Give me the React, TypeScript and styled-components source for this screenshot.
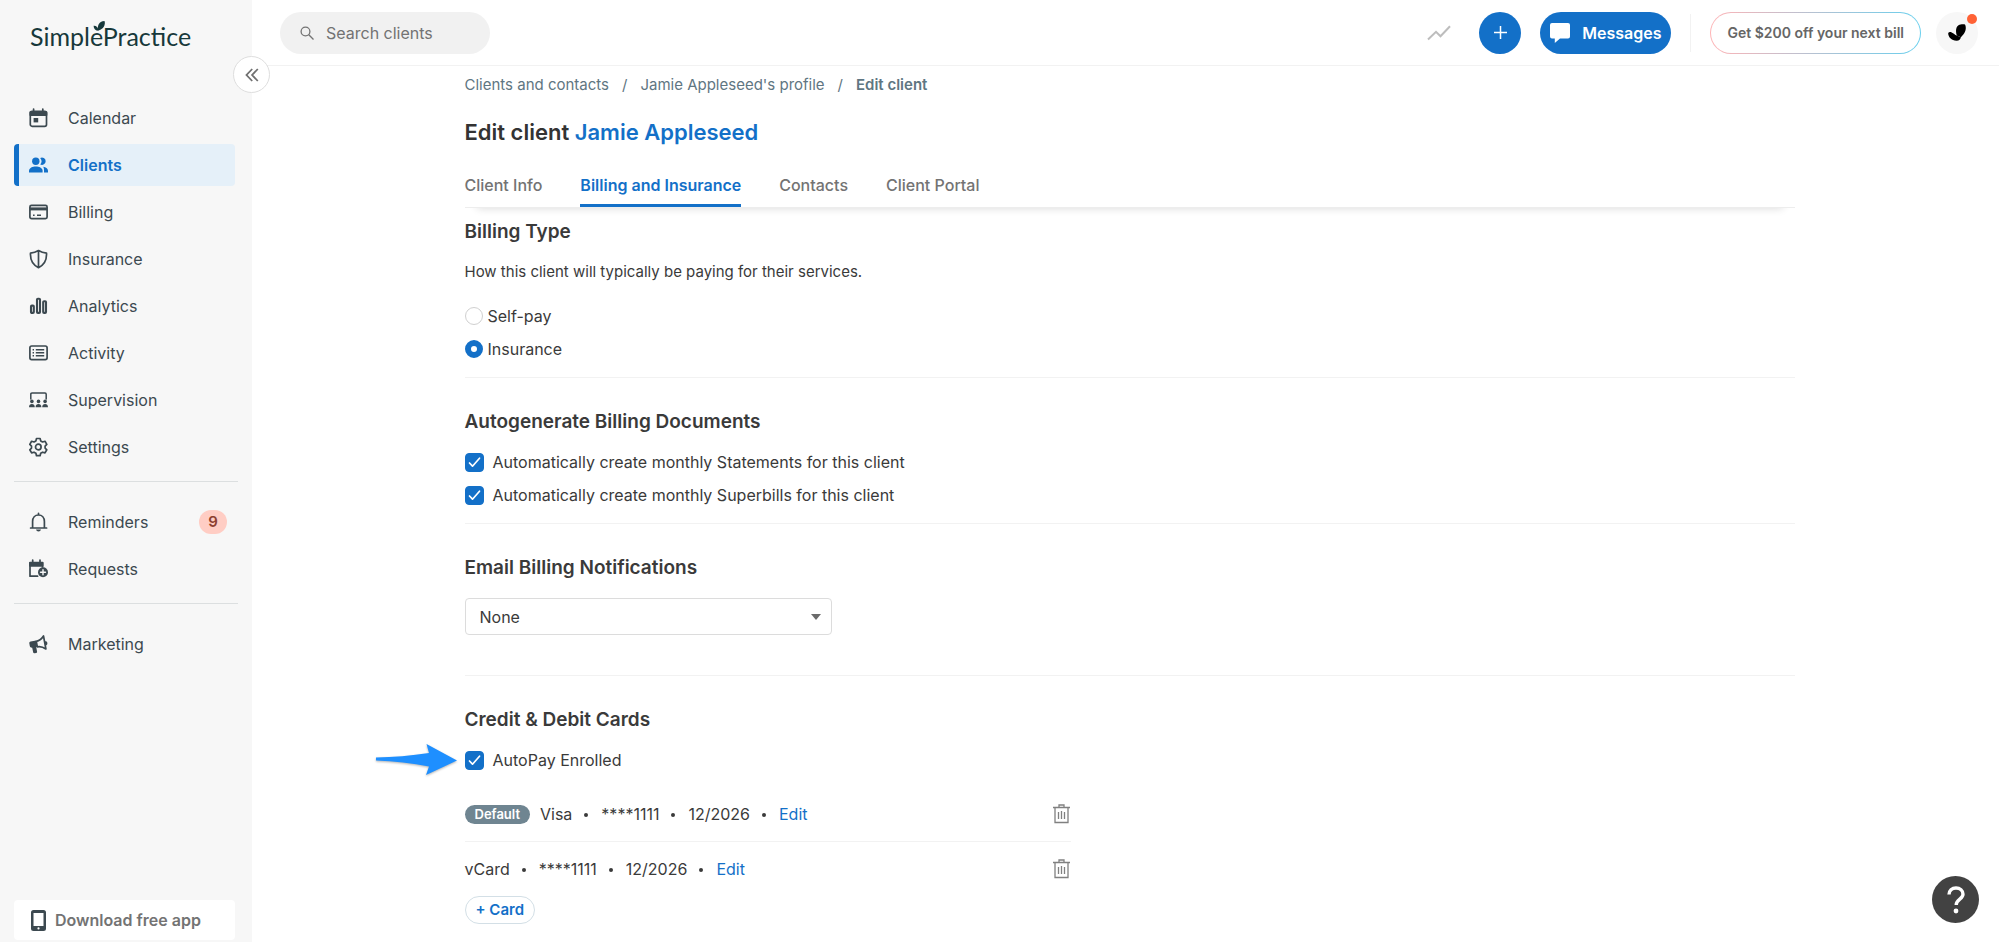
import React, { useState } from 'react';
import styled, { createGlobalStyle, css } from 'styled-components';

const colors = {
  blue: '#1370c8',
  slate: '#3c4950',
  text: '#3a3a3a',
  muted: '#737373',
  crumb: '#5f7682',
  line: '#f2f2f2',
  sidebar: '#f7f7f7',
};

const GlobalStyle = createGlobalStyle`
  *, *::before, *::after { box-sizing: border-box; }
  body {
    margin: 0;
    background: #fff;
    color: ${colors.text};
    font-family: Inter, "Liberation Sans", sans-serif;
    font-size: 16px;
    line-height: 20px;
  }
  button, input, select { font: inherit; color: inherit; }
  button { cursor: pointer; }
  a { color: inherit; text-decoration: none; }
  svg { display: block; flex: none; }
`;

/* ---------- Shell ---------- */

const Shell = styled.div`
  display: flex;
  min-height: 100vh;
`;

const Sidebar = styled.aside`
  position: relative;
  display: flex;
  flex-direction: column;
  flex: none;
  width: 252px;
  padding: 20px 14px 2px;
  background: ${colors.sidebar};
`;

const Logo = styled.a`
  position: relative;
  align-self: flex-start;
  margin: 0 0 45px 16px;
  color: #17393b;
  font-family: Lato, "Liberation Sans", sans-serif;
  font-size: 25px;
  line-height: 32px;
`;

const LogoLeaf = styled.svg`
  position: absolute;
  left: 63px;
  top: 0;
`;

const CollapseButton = styled.button`
  position: absolute;
  top: 56px;
  right: -18px;
  display: grid;
  place-items: center;
  width: 37px;
  height: 37px;
  padding: 0;
  border: 1px solid #dedede;
  border-radius: 50%;
  background: #fff;
  color: #707070;
`;

const NavGroup = styled.ul`
  display: flex;
  flex-direction: column;
  gap: 5px;
  margin: 0;
  padding: 0 3px 0 0;
  list-style: none;
`;

const NavLink = styled.a<{ $active?: boolean }>`
  display: flex;
  align-items: center;
  gap: 20px;
  height: 42px;
  padding: 0 8px 0 10px;
  border-left: 5px solid transparent;
  border-radius: 4px;
  color: ${colors.slate};
  ${(p) =>
    p.$active &&
    css`
      border-left-color: ${colors.blue};
      background: #e5f0f9;
      color: ${colors.blue};
      font-weight: 600;
    `}
`;

const NavBadge = styled.span`
  margin-left: auto;
  min-width: 28px;
  border-radius: 12px;
  background: #ffcdc4;
  color: #8c4030;
  font-size: 15px;
  font-weight: 600;
  line-height: 24px;
  text-align: center;
`;

const NavDivider = styled.hr`
  width: 100%;
  height: 1px;
  margin: 13px 0 19px;
  border: 0;
  background: #dcdfe0;
`;

const DownloadButton = styled.button`
  display: flex;
  align-items: center;
  gap: 9px;
  height: 40px;
  margin: auto 3px 0 0;
  padding: 0 17px;
  border: 0;
  border-radius: 4px;
  background: #fff;
  color: ${colors.muted};
  font-weight: 600;

  svg { color: ${colors.slate}; }
`;

const Column = styled.div`
  flex: 1;
  min-width: 0;
`;

/* ---------- Top bar ---------- */

const TopBar = styled.header`
  display: flex;
  align-items: center;
  justify-content: space-between;
  height: 66px;
  padding: 0 21px 0 28px;
  border-bottom: 1px solid ${colors.line};
`;

const SearchBox = styled.label`
  display: flex;
  align-items: center;
  gap: 12px;
  width: 210px;
  height: 42px;
  padding: 0 20px;
  border-radius: 21px;
  background: #f1f1f1;
  color: ${colors.muted};
`;

const SearchInput = styled.input`
  width: 100%;
  min-width: 0;
  padding: 0;
  border: 0;
  outline: 0;
  background: transparent;

  &::placeholder { color: ${colors.muted}; opacity: 1; }
`;

const TopActions = styled.div`
  display: flex;
  align-items: center;
`;

const TrendButton = styled.button`
  margin-right: 28px;
  padding: 0;
  border: 0;
  background: none;
  color: #bdbdbd;
`;

const AddButton = styled.button`
  display: grid;
  place-items: center;
  width: 42px;
  height: 42px;
  margin-right: 19px;
  padding: 0;
  border: 0;
  border-radius: 50%;
  background: ${colors.blue};
  color: #fff;
`;

const MessagesButton = styled.button`
  display: flex;
  align-items: center;
  gap: 12px;
  height: 42px;
  padding: 0 10px;
  border: 0;
  border-radius: 21px;
  background: ${colors.blue};
  color: #fff;
  font-weight: 600;
`;

const TopDivider = styled.span`
  width: 1px;
  height: 38px;
  margin: 0 19px;
  background: ${colors.line};
`;

const PromoButton = styled.button`
  height: 42px;
  margin-right: 15px;
  padding: 0 16px;
  border: 1px solid transparent;
  border-radius: 21px;
  background:
    linear-gradient(#fff, #fff) padding-box,
    linear-gradient(90deg, #ffb4b6, #68cfee) border-box;
  color: #666;
  font-size: 14px;
  font-weight: 600;
`;

const AvatarButton = styled.button`
  position: relative;
  display: grid;
  place-items: center;
  width: 42px;
  height: 42px;
  padding: 0;
  border: 0;
  border-radius: 50%;
  background: #f7f7f7;
  color: #000;
`;

const AvatarDot = styled.span`
  position: absolute;
  top: 2px;
  right: 1px;
  width: 10px;
  height: 10px;
  border-radius: 50%;
  background: #ff6236;
`;

/* ---------- Page ---------- */

const Page = styled.main`
  padding: 9px 16px 16px 24px;
`;

const PageInner = styled.div`
  max-width: 1330px;
  margin: 0 auto;
`;

const Breadcrumbs = styled.nav`
  display: flex;
  gap: 13px;
  color: ${colors.crumb};
  font-size: 15px;
`;

const CurrentCrumb = styled.span`
  font-weight: 600;
`;

const Title = styled.h1`
  margin: 23px 0 29px;
  color: #333;
  font-size: 22px;
  font-weight: 600;
  line-height: 28px;

  a { color: ${colors.blue}; }
`;

const Tabs = styled.nav`
  display: flex;
  gap: 38px;
  border-bottom: 1px solid #ededed;
  box-shadow: 0 12px 8px -12px rgba(0, 0, 0, 0.16);
`;

const Tab = styled.a<{ $active?: boolean }>`
  padding-bottom: 9px;
  border-bottom: 3px solid ${(p) => (p.$active ? colors.blue : 'transparent')};
  color: ${(p) => (p.$active ? colors.blue : colors.muted)};
  font-weight: ${(p) => (p.$active ? 600 : 500)};
`;

const Section = styled.section<{ $first?: boolean; $roomy?: boolean }>`
  padding: ${(p) => (p.$first ? 12 : 32)}px 0 ${(p) => (p.$roomy ? 40 : 18)}px;
  border-bottom: 1px solid ${colors.line};

  &:last-child { border-bottom: 0; padding-bottom: 0; }
`;

const Heading = styled.h2`
  margin: 0 0 18px;
  font-size: 19px;
  font-weight: 600;
  line-height: 24px;
`;

const Description = styled.p`
  margin: 0 0 24px;
  font-size: 15px;
`;

const ChoiceList = styled.div`
  display: flex;
  flex-direction: column;
  gap: 13px;
`;

const Choice = styled.label<{ $gap: number }>`
  display: flex;
  align-items: center;
  align-self: flex-start;
  gap: ${(p) => p.$gap}px;
`;

const Radio = styled.input`
  appearance: none;
  width: 18px;
  height: 18px;
  margin: 0;
  border: 1px solid #d0d0d0;
  border-radius: 50%;
  background: #fff;

  &:checked { border: 6px solid ${colors.blue}; }
`;

const CheckInput = styled.input`
  appearance: none;
  width: 19px;
  height: 19px;
  margin: 0;
  border: 1px solid #d0d0d0;
  border-radius: 4px;
  background: #fff;

  &:checked {
    border-color: ${colors.blue};
    background: ${colors.blue};
  }
`;

const CheckBoxWrap = styled.span`
  display: grid;
  place-items: center;
  flex: none;

  > * { grid-area: 1 / 1; }
  > svg { pointer-events: none; }
`;

const Callout = styled.svg`
  position: absolute;
  right: calc(100% + 8px);
  top: -6px;
  filter: drop-shadow(0 1px 1px rgba(0, 0, 0, 0.3));
`;

const CalloutRow = styled.div`
  position: relative;
  display: flex;
`;

const SelectWrap = styled.div`
  display: grid;
  align-items: center;
  width: 367px;
  max-width: 100%;

  > * { grid-area: 1 / 1; }
  > svg { justify-self: end; margin-right: 11px; pointer-events: none; }
`;

const Select = styled.select`
  appearance: none;
  width: 100%;
  height: 37px;
  padding: 0 32px 0 14px;
  border: 1px solid #dcdcdc;
  border-radius: 4px;
  background: #fff;
`;

const CardList = styled.ul`
  max-width: 606px;
  margin: 17px 0 0;
  padding: 0;
  list-style: none;
`;

const CardRow = styled.li`
  display: flex;
  align-items: center;
  height: 54px;

  & + & { border-top: 1px solid ${colors.line}; height: 55px; }
`;

const DefaultTag = styled.span`
  margin-right: 10px;
  padding: 0 10px;
  border-radius: 10px;
  background: #6f8591;
  color: #fff;
  font-size: 13px;
  font-weight: 600;
  line-height: 19px;
`;

const Bullet = styled.span`
  width: 4px;
  height: 4px;
  margin: 2px 13px 0 12px;
  border-radius: 50%;
  background: currentColor;
`;

const EditLink = styled.a`
  color: ${colors.blue};
`;

const TrashButton = styled.button`
  margin-left: auto;
  padding: 0 1px;
  border: 0;
  background: none;
  color: #808080;
`;

const AddCardButton = styled.button`
  height: 28px;
  padding: 0 10px;
  border: 1px solid #d3dfe6;
  border-radius: 14px;
  background: #fff;
  color: ${colors.blue};
  font-size: 15px;
  font-weight: 600;
`;

const HelpButton = styled.button`
  position: fixed;
  right: 20px;
  bottom: 19px;
  display: grid;
  place-items: center;
  width: 47px;
  height: 47px;
  padding: 0;
  border: 0;
  border-radius: 50%;
  background: #424242;
  color: #fff;
`;

/* ---------- Icons ---------- */

const NavSvg = ({ children }: { children: React.ReactNode }) => (
  <svg width="19" height="20" viewBox="0 0 19 20" fill="none" stroke="currentColor" strokeWidth="1.7" strokeLinecap="round" strokeLinejoin="round" aria-hidden="true">
    {children}
  </svg>
);

const icons = {
  calendar: (
    <NavSvg>
      <rect x="1.3" y="3.3" width="16.2" height="15" rx="1.8" />
      <path d="M1.3 4.2h16.2v2.9H1.3zM4.6 1v2.5M13.8 1v2.5" fill="currentColor" />
      <path d="M4.6 10h4.6v4.4H4.6z" fill="currentColor" stroke="none" />
    </NavSvg>
  ),
  clients: (
    <NavSvg>
      <g fill="currentColor" stroke="none">
        <circle cx="6.8" cy="6.2" r="3.7" />
        <path d="M0 17.5v-1.7c0-2.9 3.6-4.3 6.8-4.3s6.8 1.4 6.8 4.3v1.7z" />
        <path d="M11.2 9.4a5 5 0 0 0 0-6.5 3.7 3.7 0 1 1 0 6.5z" />
        <path d="M15 17.5h4v-1.7c0-2.2-2.2-3.6-4.8-4 .6.8.8 2.2.8 3.7z" />
      </g>
    </NavSvg>
  ),
  billing: (
    <NavSvg>
      <rect x=".9" y="3.3" width="17.2" height="13.4" rx="1.6" />
      <path d="M1 5.4h17v3H1z" fill="currentColor" stroke="none" />
      <path d="M4 13.2h1.6M8 13.2h4" strokeWidth="1.5" strokeLinecap="butt" />
    </NavSvg>
  ),
  insurance: (
    <NavSvg>
      <path d="M9.500 1.5c2.300 1.400 5 2.300 8 2.600.4 6.200-2.300 11.700-8 14.600C3.800 15.800 1.100 10.300 1.500 4.100c3-.3 5.700-1.200 8-2.600zM9.500 1.800v16.600" />
    </NavSvg>
  ),
  analytics: (
    <NavSvg>
      <g strokeWidth="2.1">
        <rect x="2" y="9.600" width="2.800" height="7.300" rx=".9" />
        <rect x="8" y="2.700" width="3" height="14.200" rx=".9" />
        <rect x="14.200" y="5.200" width="2.800" height="11.700" rx=".9" />
      </g>
    </NavSvg>
  ),
  activity: (
    <NavSvg>
      <rect x=".9" y="3" width="17.2" height="13.6" rx="1.800" />
      <path d="M3.600 6.800h1.400M3.600 9.800h1.400M3.600 12.800h1.400M6.800 6.800h8.400M6.800 9.800h8.400M6.800 12.800h8.400" strokeWidth="1.600" strokeLinecap="butt" />
    </NavSvg>
  ),
  supervision: (
    <NavSvg>
      <path d="M1.800 9V4.200c0-.7.400-1.200 1.200-1.200h13c.8 0 1.200.5 1.200 1.200V9" strokeWidth="1.500" />
      <g fill="currentColor" stroke="none">
        <circle cx="2.900" cy="11.400" r="1.800" />
        <circle cx="9.500" cy="11.400" r="1.800" />
        <circle cx="16.100" cy="11.400" r="1.800" />
        <path d="M0 17.300c0-2.400 1.200-3.300 2.900-3.300s2.900.9 2.900 3.300zM6.600 17.300c0-2.400 1.200-3.300 2.900-3.300s2.900.9 2.900 3.300zM13.200 17.300c0-2.400 1.200-3.300 2.900-3.300s2.900.9 2.900 3.300z" />
      </g>
    </NavSvg>
  ),
  settings: (
    <NavSvg>
      <circle cx="9.300" cy="10" r="2.800" />
      <path d="M7.500 1.500h3.600l.6 2.400 1.900 1.100 2.400-.7 1.800 3.100-1.700 1.700v2l1.700 1.700-1.800 3.100-2.400-.7-1.900 1.100-.6 2.400H7.500l-.6-2.400L5 15.200l-2.400.7-1.800-3.100 1.700-1.700v-2L.8 7.400l1.800-3.100 2.400.7 1.900-1.100z" />
    </NavSvg>
  ),
  reminders: (
    <NavSvg>
      <path d="M1.600 16h16M3.600 15.800V9.500c0-3.800 2.400-6.500 5.900-6.500s5.900 2.700 5.900 6.500v6.300M9.500 1.300V3" />
      <path d="M7 17.600h5c-.3 1.300-1.300 2-2.500 2s-2.200-.7-2.500-2z" fill="currentColor" stroke="none" />
    </NavSvg>
  ),
  requests: (
    <NavSvg>
      <path d="M8.600 17.200H1V3.600h12.600V8" />
      <path d="M1 3.800h12.600v3H1zM3.700 1v2.500M11 1v2.500" fill="currentColor" />
      <circle cx="14" cy="13.200" r="5" fill="currentColor" stroke="none" />
      <path d="M14 10.700v5M11.500 13.200h5" stroke="#f7f7f7" strokeWidth="1.400" />
    </NavSvg>
  ),
  marketing: (
    <NavSvg>
      <path d="M.3 9.200c0-.9.500-1.500 1.300-1.700l5.600-1 .9 6.300-.9.200.9 4.800c.1.600-.3 1-.8 1.100l-1.900.3c-.6.100-1-.3-1.200-.8l-1-4.600c-1.300.1-2.200-.6-2.400-1.700z" fill="currentColor" stroke="none" />
      <path d="M7.300 7.300c2.900-.6 5.400-2.300 7.200-5.300l2.400 13c-2.800-2-5.600-2.800-8.600-2.200zM16.200 7.800c1.400.1 2 2.200.6 3" />
    </NavSvg>
  ),
};

const TrashIcon = () => (
  <svg width="17" height="20" viewBox="0 0 17 20" fill="none" stroke="currentColor" strokeWidth="1.3" aria-hidden="true">
    <path d="M0 3.500h17M2 3.500v15h13v-15M6 3.500V1h5v2.500M5.500 8v7M8.500 7v8M11.500 8v7" />
  </svg>
);

/* ---------- Content ---------- */

type NavEntry = { label: string; icon: keyof typeof icons; badge?: string };

const navGroups: NavEntry[][] = [
  [
    { label: 'Calendar', icon: 'calendar' },
    { label: 'Clients', icon: 'clients' },
    { label: 'Billing', icon: 'billing' },
    { label: 'Insurance', icon: 'insurance' },
    { label: 'Analytics', icon: 'analytics' },
    { label: 'Activity', icon: 'activity' },
    { label: 'Supervision', icon: 'supervision' },
    { label: 'Settings', icon: 'settings' },
  ],
  [
    { label: 'Reminders', icon: 'reminders', badge: '9' },
    { label: 'Requests', icon: 'requests' },
  ],
  [{ label: 'Marketing', icon: 'marketing' }],
];

const tabs = ['Client Info', 'Billing and Insurance', 'Contacts', 'Client Portal'];

const cards = [
  { name: 'Visa', number: '****1111', expires: '12/2026', isDefault: true },
  { name: 'vCard', number: '****1111', expires: '12/2026', isDefault: false },
];

const Checkbox = ({ label }: { label: string }) => {
  const [checked, setChecked] = useState(true);
  return (
    <Choice $gap={9}>
      <CheckBoxWrap>
        <CheckInput type="checkbox" checked={checked} onChange={(e) => setChecked(e.target.checked)} />
        <svg width="13" height="11" viewBox="0 0 13 11" fill="none" stroke="#fff" strokeWidth="1.7" strokeLinecap="round" strokeLinejoin="round" aria-hidden="true">
          <path d="M1.500 6l3 3.200 7-8" />
        </svg>
      </CheckBoxWrap>
      {label}
    </Choice>
  );
};

export default function App() {
  const [billingType, setBillingType] = useState('Insurance');

  return (
    <>
      <GlobalStyle />
      <Shell>
        <Sidebar>
          <Logo href="#">
            SimplePractice
            <LogoLeaf width="13" height="12" viewBox="0 0 13 12" fill="currentColor" aria-hidden="true">
              <path d="M5 10.500C4.200 6 5.500 1.500 11.500 1c1.200 3.500-.8 8.500-6.500 9.500z" />
              <path d="M5.500 10.800C2.500 10.800.8 9 .6 5.800c2.600-.2 4.600 1.400 4.900 5z" />
            </LogoLeaf>
          </Logo>
          <CollapseButton aria-label="Collapse menu">
            <svg width="14" height="14" viewBox="0 0 14 14" fill="none" stroke="currentColor" strokeWidth="1.800" aria-hidden="true">
              <path d="M7.200 1L1.500 7l5.700 6M12.800 1L7.100 7l5.700 6" />
            </svg>
          </CollapseButton>
          {navGroups.map((group, index) => (
            <React.Fragment key={index}>
              {index > 0 && <NavDivider />}
              <NavGroup>
                {group.map((item) => (
                  <li key={item.label}>
                    <NavLink href="#" $active={item.label === 'Clients'}>
                      {icons[item.icon]}
                      {item.label}
                      {item.badge && <NavBadge>{item.badge}</NavBadge>}
                    </NavLink>
                  </li>
                ))}
              </NavGroup>
            </React.Fragment>
          ))}
          <DownloadButton>
            <svg width="15" height="21" viewBox="0 0 15 21" aria-hidden="true">
              <path fill="currentColor" fillRule="evenodd" d="M2.500 0h10A2.500 2.500 0 0 1 15 2.500v16a2.500 2.500 0 0 1-2.500 2.500h-10A2.500 2.500 0 0 1 0 18.500v-16A2.500 2.500 0 0 1 2.500 0zM2.500 3v13h10V3zM7.500 17.300a1.100 1.100 0 1 0 0 2.200 1.100 1.100 0 0 0 0-2.200z" />
            </svg>
            Download free app
          </DownloadButton>
        </Sidebar>

        <Column>
          <TopBar>
            <SearchBox>
              <svg width="14" height="14" viewBox="0 0 14 14" fill="none" stroke="currentColor" strokeWidth="1.300" aria-hidden="true">
                <circle cx="5.500" cy="5.500" r="4.400" />
                <path d="M8.800 8.800l4.700 4.700" />
              </svg>
              <SearchInput type="text" placeholder="Search clients" aria-label="Search clients" />
            </SearchBox>
            <TopActions>
              <TrendButton aria-label="Trends">
                <svg width="24" height="16" viewBox="0 0 24 16" fill="none" stroke="currentColor" strokeWidth="2" aria-hidden="true">
                  <path d="M1 14.500l8-7.700 4.500 4.500L23 1.200" />
                </svg>
              </TrendButton>
              <AddButton aria-label="Add">
                <svg width="13" height="13" viewBox="0 0 13 13" stroke="currentColor" strokeWidth="1.500" aria-hidden="true">
                  <path d="M6.500 0v13M0 6.500h13" />
                </svg>
              </AddButton>
              <MessagesButton>
                <svg width="20" height="20" viewBox="0 0 20 20" fill="currentColor" aria-hidden="true">
                  <path d="M2 0h16a2 2 0 0 1 2 2v11.500a2 2 0 0 1-2 2h-8L4.800 20v-4.500H2a2 2 0 0 1-2-2V2a2 2 0 0 1 2-2z" />
                </svg>
                Messages
              </MessagesButton>
              <TopDivider />
              <PromoButton>Get $200 off your next bill</PromoButton>
              <AvatarButton aria-label="Account">
                <svg width="18" height="17" viewBox="0 0 18 17" fill="currentColor" aria-hidden="true">
                  <path d="M8.800 11.500C7.400 7.500 7.800 3 10.500 1.300 12.500 0 15.800-.1 17 .6c1.300 2.400 1 5.900-.8 8.700-1.100 1.800-2.500 3-3.300 4z" />
                  <path d="M.2 9c1.300-1.800 3.300-.9 5.300.6 1.600 1.200 2.700 2 3.300 1.900l4.100 1.800c-.3 2-1.900 3.500-4.400 3.400C3.500 16.500 0 13 .2 9z" />
                </svg>
                <AvatarDot />
              </AvatarButton>
            </TopActions>
          </TopBar>

          <Page>
            <PageInner>
              <Breadcrumbs aria-label="Breadcrumb">
                <a href="#">Clients and contacts</a>
                <span>/</span>
                <a href="#">Jamie Appleseed's profile</a>
                <span>/</span>
                <CurrentCrumb>Edit client</CurrentCrumb>
              </Breadcrumbs>
              <Title>
                Edit client <a href="#">Jamie Appleseed</a>
              </Title>
              <Tabs>
                {tabs.map((tab) => (
                  <Tab key={tab} href="#" $active={tab === 'Billing and Insurance'}>
                    {tab}
                  </Tab>
                ))}
              </Tabs>

              <Section $first>
                <Heading>Billing Type</Heading>
                <Description>How this client will typically be paying for their services.</Description>
                <ChoiceList>
                  {['Self-pay', 'Insurance'].map((option) => (
                    <Choice key={option} $gap={5}>
                      <Radio
                        type="radio"
                        name="billing-type"
                        checked={billingType === option}
                        onChange={() => setBillingType(option)}
                      />
                      {option}
                    </Choice>
                  ))}
                </ChoiceList>
              </Section>

              <Section>
                <Heading>Autogenerate Billing Documents</Heading>
                <ChoiceList>
                  <Checkbox label="Automatically create monthly Statements for this client" />
                  <Checkbox label="Automatically create monthly Superbills for this client" />
                </ChoiceList>
              </Section>

              <Section $roomy>
                <Heading>Email Billing Notifications</Heading>
                <SelectWrap>
                  <Select aria-label="Email Billing Notifications" defaultValue="None">
                    <option>None</option>
                  </Select>
                  <svg width="10" height="6" viewBox="0 0 10 6" fill="#6b6b6b" aria-hidden="true">
                    <path d="M0 0h10L5 6z" />
                  </svg>
                </SelectWrap>
              </Section>

              <Section>
                <Heading>Credit &amp; Debit Cards</Heading>
                <CalloutRow>
                  <Callout width="81" height="32" viewBox="0 0 81 32" fill="#1e8fff" aria-hidden="true">
                    <path d="M0 13.500c17-.4 35-1.600 53-4.500L50.500 0 81 16.500 50 31l3-8.500C36 19.500 18 17 0 16.500z" />
                  </Callout>
                  <Checkbox label="AutoPay Enrolled" />
                </CalloutRow>
                <CardList>
                  {cards.map((card) => (
                    <CardRow key={card.name}>
                      {card.isDefault && <DefaultTag>Default</DefaultTag>}
                      {card.name}
                      <Bullet />
                      {card.number}
                      <Bullet />
                      {card.expires}
                      <Bullet />
                      <EditLink href="#">Edit</EditLink>
                      <TrashButton aria-label={`Delete ${card.name}`}>
                        <TrashIcon />
                      </TrashButton>
                    </CardRow>
                  ))}
                </CardList>
                <AddCardButton>+ Card</AddCardButton>
              </Section>
            </PageInner>
          </Page>
        </Column>
      </Shell>
      <HelpButton aria-label="Help">
        <svg width="18" height="28" viewBox="0 0 18 28" fill="none" stroke="currentColor" strokeWidth="3.400" aria-hidden="true">
          <path d="M2 8.500C2 4.500 5 2 9 2s7 2.500 7 6.300c0 4.800-6.800 5-6.800 10.700" />
          <circle cx="9" cy="25" r="2.400" fill="currentColor" stroke="none" />
        </svg>
      </HelpButton>
    </>
  );
}
